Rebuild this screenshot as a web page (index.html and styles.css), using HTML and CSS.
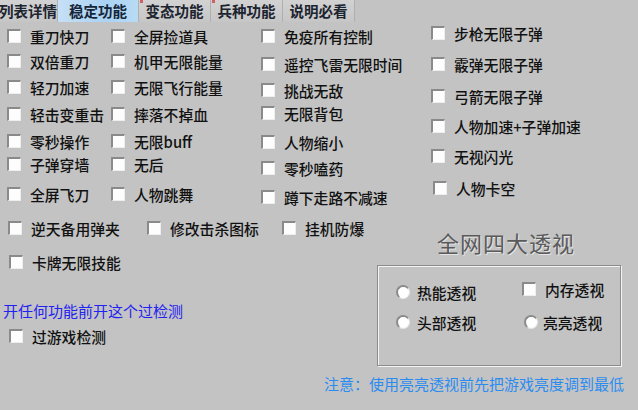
FILE: index.html
```html
<!DOCTYPE html>
<html lang="zh-CN">
<head>
    <meta charset="UTF-8">
    <title>稳定功能</title>
    <link rel="stylesheet" href="styles.css">
</head>
<body>
    <div class="window">
        <!-- 标签栏 -->
        <div class="tabs">
            <div class="tab tab-first">列表详情</div>
            <div class="tab active">稳定功能</div>
            <div class="tab mark">变态功能</div>
            <div class="tab mark">兵种功能</div>
            <div class="tab">说明必看</div>
        </div>

        <!-- 功能开关 -->
        <div class="options">
            <div class="col col-a">
                <label class="chk"><span class="box"></span>重刀快刀</label>
                <label class="chk"><span class="box"></span>双倍重刀</label>
                <label class="chk"><span class="box"></span>轻刀加速</label>
                <label class="chk"><span class="box"></span>轻击变重击</label>
                <label class="chk"><span class="box"></span>零秒操作</label>
                <label class="chk"><span class="box"></span>子弹穿墙</label>
                <label class="chk"><span class="box"></span>全屏飞刀</label>
            </div>
            <div class="col col-b">
                <label class="chk"><span class="box"></span>全屏捡道具</label>
                <label class="chk"><span class="box"></span>机甲无限能量</label>
                <label class="chk"><span class="box"></span>无限飞行能量</label>
                <label class="chk"><span class="box"></span>摔落不掉血</label>
                <label class="chk"><span class="box"></span>无限buff</label>
                <label class="chk"><span class="box"></span>无后</label>
                <label class="chk"><span class="box"></span>人物跳舞</label>
            </div>
            <div class="col col-c">
                <label class="chk"><span class="box"></span>免疫所有控制</label>
                <label class="chk"><span class="box"></span>遥控飞雷无限时间</label>
                <label class="chk"><span class="box"></span>挑战无敌</label>
                <label class="chk"><span class="box"></span>无限背包</label>
                <label class="chk"><span class="box"></span>人物缩小</label>
                <label class="chk"><span class="box"></span>零秒嗑药</label>
                <label class="chk"><span class="box"></span>蹲下走路不减速</label>
            </div>
            <div class="col col-d">
                <label class="chk"><span class="box"></span>步枪无限子弹</label>
                <label class="chk"><span class="box"></span>霰弹无限子弹</label>
                <label class="chk"><span class="box"></span>弓箭无限子弹</label>
                <label class="chk"><span class="box"></span>人物加速+子弹加速</label>
                <label class="chk"><span class="box"></span>无视闪光</label>
                <label class="chk shift"><span class="box"></span>人物卡空</label>
            </div>
        </div>

        <div class="lower">
            <div class="lower-left">
                <div class="row-extra">
                    <label class="chk"><span class="box"></span>逆天备用弹夹</label>
                    <label class="chk"><span class="box"></span>修改击杀图标</label>
                    <label class="chk"><span class="box"></span>挂机防爆</label>
                </div>
                <label class="chk card"><span class="box"></span>卡牌无限技能</label>
                <p class="hint">开任何功能前开这个过检测</p>
                <label class="chk bypass"><span class="box"></span>过游戏检测</label>
            </div>

            <div class="lower-right">
                <div class="group-title">全网四大透视</div>
                <div class="group">
                    <div class="group-grid">
                        <label class="radio"><span class="dot"></span>热能透视</label>
                        <label class="chk"><span class="box"></span>内存透视</label>
                        <label class="radio"><span class="dot"></span>头部透视</label>
                        <label class="radio bright"><span class="dot"></span>亮亮透视</label>
                    </div>
                </div>
            </div>
        </div>

        <p class="note">注意：使用亮亮透视前先把游戏亮度调到最低</p>
    </div>
</body>
</html>
```

FILE: styles.css
```css
body {
    margin: 0;
    background-color: #c3c3c3;
    font-family: "Noto Sans CJK SC", "Noto Sans", sans-serif;
    color: #111;
}
.window {
    width: 638px;
    height: 410px;
    overflow: hidden;
}

/* 标签栏 */
.tabs {
    display: flex;
    height: 22px;
    align-items: stretch;
}
.tab {
    width: 71px;
    font-size: 14.5px;
    font-weight: bold;
    color: #1c2430;
    line-height: 22px;
    text-align: center;
    background: linear-gradient(#d2d2d2, #c6c6c6);
    border-right: 1px solid #b0b0b0;
    position: relative;
}
.tab-first {
    width: 58px;
    margin-left: -1px;
    text-align: left;
}
.tab.active {
    width: 80px;
    background: linear-gradient(90deg, #c6e0f6, #a9d2f4 60%, #b9dbf5);
    color: #16263a;
}
.tab.mark::before {
    content: "";
    position: absolute;
    left: 1px;
    top: 0;
    width: 3px;
    height: 3px;
    background: #d06060;
}

/* 复选框 */
.chk, .radio {
    display: flex;
    align-items: center;
    height: 20px;
    font-size: 14.8px;
    font-weight: 500;
    white-space: nowrap;
}
.box {
    width: 11px;
    height: 11px;
    margin-right: 9px;
    background: #fdfdfd;
    border-top: 2px solid #8a8a8a;
    border-left: 2px solid #8a8a8a;
    border-right: 1px solid #eee;
    border-bottom: 1px solid #eee;
    flex-shrink: 0;
}
.dot {
    width: 11px;
    height: 11px;
    margin-right: 7px;
    border-radius: 50%;
    background: #fff;
    border-top: 2px solid #8a8a8a;
    border-left: 2px solid #8a8a8a;
    border-right: 1px solid #e8e8e8;
    border-bottom: 1px solid #e8e8e8;
    flex-shrink: 0;
}

/* 四列功能 */
.options {
    display: flex;
    height: 187px;
}
.col {
    display: grid;
    align-content: start;
}
.col-a {
    padding: 4px 0 0 7px;
    width: 104px;
    grid-template-rows: 25px 26px 27px 27px 23px 30px 20px;
}
.col-b {
    padding-top: 4px;
    width: 150px;
    grid-template-rows: 25px 26px 27px 27px 23px 30px 20px;
}
.col-c {
    padding-top: 4px;
    width: 170px;
    grid-template-rows: 28px 26px 23px 29px 26px 29px 20px;
}
.col-d {
    padding-top: 1px;
    grid-template-rows: 31px 32px 30px 30px 32px 20px;
}
.col-d .shift {
    margin-left: 2px;
}

/* 下半部分 */
.lower {
    display: flex;
}
.lower-left {
    width: 377px;
}
.row-extra {
    display: flex;
    margin-top: 9px;
    padding-left: 8px;
}
.row-extra .chk:nth-child(1) {
    width: 139px;
}
.row-extra .chk:nth-child(2) {
    width: 135px;
}
.card {
    margin: 14px 0 0 9px;
}
.hint {
    margin: 29px 0 0 3px;
    font-size: 15px;
    line-height: 20px;
    color: #1f22f0;
}
.bypass {
    margin: 5px 0 0 9px;
}

/* 透视分组 */
.lower-right {
    width: 244px;
}
.group-title {
    margin: 20px 0 0 60px;
    font-size: 22px;
    line-height: 26px;
    color: #5a5a5a;
    text-shadow: 1px 1px 0 #e4e4e4;
    letter-spacing: 1px;
}
.group {
    margin-top: 10px;
    height: 99px;
    border: 1px solid #8c8c8c;
    box-shadow: inset 1px 1px 0 #f4f4f4, 1px 1px 0 #f4f4f4;
}
.group-grid {
    display: grid;
    grid-template-columns: 126px auto;
    grid-template-rows: 30px 20px;
    padding: 16px 0 0 18px;
}
.group-grid .chk {
    margin-top: -3px;
}
.group-grid .bright {
    margin-left: 2px;
}
.group-grid .bright .dot {
    margin-right: 5px;
}

.note {
    margin: 8px 14px 0 0;
    text-align: right;
    font-size: 15px;
    line-height: 20px;
    color: #2b8cf0;
}
```
